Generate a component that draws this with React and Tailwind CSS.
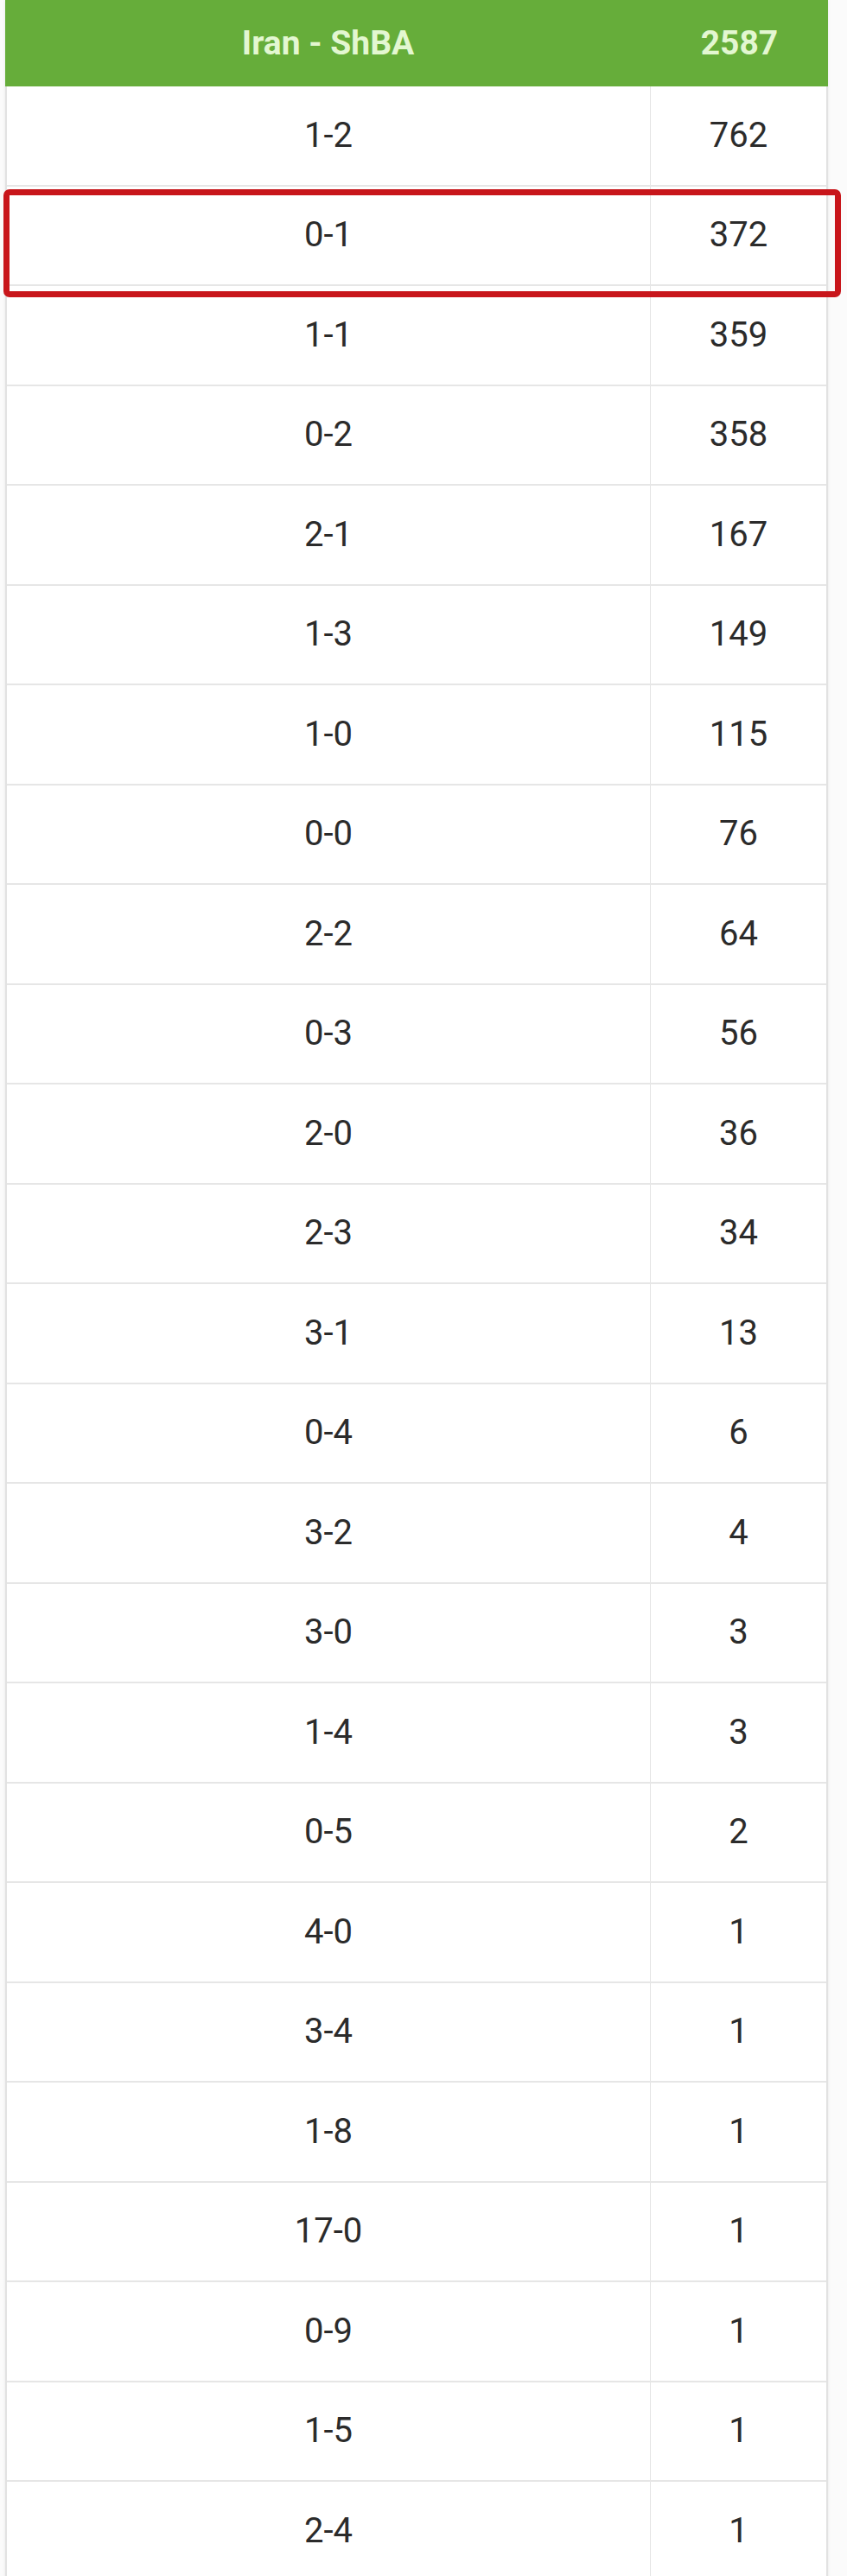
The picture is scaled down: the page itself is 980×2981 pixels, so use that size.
const ROWS = [
  ['1-2', 762],
  ['0-1', 372],
  ['1-1', 359],
  ['0-2', 358],
  ['2-1', 167],
  ['1-3', 149],
  ['1-0', 115],
  ['0-0', 76],
  ['2-2', 64],
  ['0-3', 56],
  ['2-0', 36],
  ['2-3', 34],
  ['3-1', 13],
  ['0-4', 6],
  ['3-2', 4],
  ['3-0', 3],
  ['1-4', 3],
  ['0-5', 2],
  ['4-0', 1],
  ['3-4', 1],
  ['1-8', 1],
  ['17-0', 1],
  ['0-9', 1],
  ['1-5', 1],
  ['2-4', 1],
]

export default function App() {
  return (
    <div className="w-[980px] h-[2981px] overflow-hidden bg-[#fbfbfb] font-['Roboto',sans-serif]">
      <div className="relative ml-[6px] w-[952px] bg-white border-x-2 border-[#e2e2e2] shadow-[0_0_4px_rgba(0,0,0,0.08)]">
        {/* header */}
        <div className="flex h-[100px] bg-[#66ad3a] text-[#e3f7d1] font-bold text-[39px] -mx-[2px]">
          <div className="w-[747px] flex items-center justify-center">Iran - ShBA</div>
          <div className="flex-1 flex items-center justify-center">2587</div>
        </div>

        {ROWS.map(([score, count]) => (
          <div
            key={score}
            className="flex h-[115.5px] border-b-2 border-[#e6e6e6] text-[40px] text-[#2b2b2b]"
          >
            <div className="w-[745px] flex items-center justify-center border-r border-[#e4e4e4]">
              {score}
            </div>
            <div className="flex-1 flex items-center justify-center">{count}</div>
          </div>
        ))}

        {/* highlight on the 0-1 row */}
        <div className="absolute left-[-4px] top-[219px] w-[969px] h-[125px] border-[7px] border-[#c8161b] rounded-[7px] pointer-events-none" />
      </div>
    </div>
  )
}
